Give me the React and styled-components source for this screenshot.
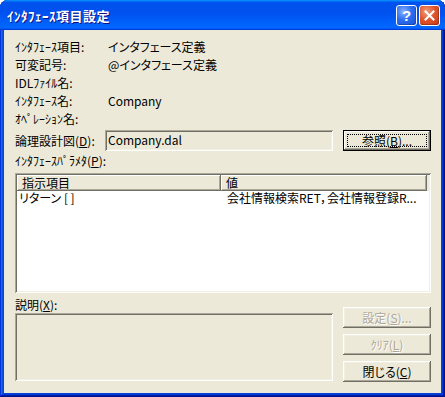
import React from "react";
import styled, { createGlobalStyle } from "styled-components";

const GlobalStyle = createGlobalStyle`
  html, body {
    margin: 0;
    padding: 0;
    background: #ffffff;
  }
  body {
    font-family: "Noto Sans CJK JP", "Liberation Sans", sans-serif;
    font-size: 12px;
    font-feature-settings: "palt";
    color: #000;
  }
`;

const Window = styled.div`
  width: 445px;
  height: 397px;
  box-sizing: border-box;
  display: flex;
  flex-direction: column;
  background: #0842d9;
  border-radius: 8px 8px 0 0;
  overflow: hidden;
  box-shadow: inset -1px -1px #00138c, inset 1px 1px #0831d9,
    inset -2px -2px #001ea0, inset 2px 2px #166aee, inset -3px -3px #003bda,
    inset 3px 3px #0855dd;
`;

const TitleBar = styled.div`
  height: 30px;
  flex: none;
  display: flex;
  align-items: center;
  justify-content: space-between;
  padding: 0 5px 0 7px;
  box-sizing: border-box;
  background: linear-gradient(
    180deg,
    #0997ff,
    #0053ee 8%,
    #0050ee 40%,
    #0066ff 88%,
    #0066ff 93%,
    #005bff 95%,
    #003dd7 96%,
    #003dd7
  );
`;

const TitleText = styled.span`
  color: #fff;
  font-weight: bold;
  font-size: 13px;
  letter-spacing: 0.5px;
  text-shadow: 1px 1px #0f1089;
`;

const TitleButtons = styled.div`
  display: flex;
  gap: 2px;
`;

const CaptionButton = styled.div`
  width: 21px;
  height: 21px;
  box-sizing: border-box;
  border: 1px solid #fff;
  border-radius: 3px;
  display: flex;
  align-items: center;
  justify-content: center;
  color: #fff;
  font-family: "Liberation Sans", sans-serif;
  font-weight: bold;
  font-size: 15px;
  background: ${(p) =>
    p.$close
      ? "radial-gradient(circle at 35% 30%, #f0a080 0%, #e0562e 45%, #c43512 100%)"
      : "radial-gradient(circle at 35% 30%, #8ab4ff 0%, #2d6ff0 45%, #1a4fd8 100%)"};
  box-shadow: inset -1px -1px rgba(0, 0, 0, 0.2);
`;

const Client = styled.div`
  flex: 1;
  margin: 0 4px 4px;
  background: #ece9d8;
  padding: 7px 10px 0 11px;
  display: flex;
  flex-direction: column;
  font-size: 12px;
`;

const InfoGrid = styled.div`
  display: grid;
  grid-template-columns: 93px 1fr;
  grid-auto-rows: 18px;
  align-items: center;
`;

const Text = styled.span`
  white-space: nowrap;
  line-height: 15px;
`;

const FileRow = styled.div`
  display: flex;
  align-items: center;
  margin-top: 3px;
  height: 21px;
`;

const FieldLabel = styled.span`
  width: ${(p) => p.$w || 90}px;
  flex: none;
  white-space: nowrap;
`;

const Sunken = styled.div`
  box-sizing: border-box;
  width: ${(p) => p.$w}px;
  height: ${(p) => p.$h}px;
  background: ${(p) => p.$bg || "#ece9d8"};
  box-shadow: inset 1px 1px #aca899, inset -1px -1px #fff,
    inset 2px 2px #716f64, inset -2px -2px #f1efe2;
  padding: 2px 3px;
  line-height: 16px;
  white-space: nowrap;
  overflow: hidden;
`;

const Button = styled.div`
  box-sizing: border-box;
  width: 88px;
  height: 21px;
  flex: none;
  display: flex;
  align-items: center;
  justify-content: center;
  background: #ece9d8;
  white-space: nowrap;
  color: ${(p) => (p.$disabled ? "#aca899" : "#000")};
  text-shadow: ${(p) => (p.$disabled ? "1px 1px #fff" : "none")};
  box-shadow: ${(p) =>
    p.$default
      ? "inset 0 0 0 1px #000, inset -2px -2px #716f64, inset 2px 2px #fff, inset -3px -3px #aca899"
      : "inset -1px -1px #716f64, inset 1px 1px #fff, inset -2px -2px #aca899, inset 2px 2px #f1efe2"};
  position: relative;
  &::after {
    content: "";
    display: ${(p) => (p.$default ? "block" : "none")};
    position: absolute;
    inset: 4px;
    border: 1px dotted #000;
  }
`;

const Spacer = styled.div`
  width: 10px;
  flex: none;
`;

const SectionLabel = styled.div`
  height: 15px;
  line-height: 15px;
  margin: ${(p) => p.$m || "0"};
  white-space: nowrap;
`;

const ListView = styled.div`
  box-sizing: border-box;
  width: 416px;
  height: 120px;
  background: #fff;
  padding: 2px;
  box-shadow: inset 1px 1px #aca899, inset -1px -1px #fff,
    inset 2px 2px #716f64, inset -2px -2px #f1efe2;
  display: flex;
  flex-direction: column;
`;

const HeaderRow = styled.div`
  display: flex;
  height: 16px;
  flex: none;
`;

const HeaderCell = styled.div`
  box-sizing: border-box;
  width: ${(p) => p.$w}px;
  flex: ${(p) => (p.$fill ? 1 : "none")};
  height: 16px;
  line-height: 15px;
  padding-left: ${(p) => (p.$fill ? 0 : 5)}px;
  background: #ece9d8;
  box-shadow: ${(p) =>
    p.$fill
      ? "none"
      : "inset -1px -1px #716f64, inset 1px 1px #fff, inset -2px -2px #aca899"};
  white-space: nowrap;
`;

const DataRow = styled.div`
  display: flex;
  height: 16px;
  flex: none;
`;

const DataCell = styled.div`
  width: ${(p) => p.$w}px;
  padding-left: ${(p) => p.$pad}px;
  box-sizing: border-box;
  line-height: 14px;
  white-space: nowrap;
`;

const Bottom = styled.div`
  display: flex;
  margin-top: 3px;
`;

const DescColumn = styled.div`
  display: flex;
  flex-direction: column;
`;

const ButtonColumn = styled.div`
  display: flex;
  flex-direction: column;
  gap: 6px;
  padding-top: 11px;
`;

export default function App() {
  return (
    <>
      <GlobalStyle />
      <Window>
        <TitleBar>
          <TitleText>ｲﾝﾀﾌｪｰｽ項目設定</TitleText>
          <TitleButtons>
            <CaptionButton>?</CaptionButton>
            <CaptionButton $close>
              <svg width="11" height="11" viewBox="0 0 11 11">
                <path
                  d="M1.5 1.5 L9.5 9.5 M9.5 1.5 L1.5 9.5"
                  stroke="#fff"
                  strokeWidth="2"
                  strokeLinecap="square"
                />
              </svg>
            </CaptionButton>
          </TitleButtons>
        </TitleBar>
        <Client>
          <InfoGrid>
            <Text>ｲﾝﾀﾌｪｰｽ項目:</Text>
            <Text>インタフェース定義</Text>
            <Text>可変記号:</Text>
            <Text>@インタフェース定義</Text>
            <Text>IDLﾌｧｲﾙ名:</Text>
            <Text />
            <Text>ｲﾝﾀﾌｪｰｽ名:</Text>
            <Text>Company</Text>
            <Text>ｵﾍﾟﾚｰｼｮﾝ名:</Text>
            <Text />
          </InfoGrid>
          <FileRow>
            <FieldLabel>
              論理設計図(<u>D</u>):
            </FieldLabel>
            <Sunken $w={228} $h={21}>
              Company.dal
            </Sunken>
            <Spacer />
            <Button $default>
              参照(<u>B</u>)...
            </Button>
          </FileRow>
          <SectionLabel $m="2px 0 5px">
            ｲﾝﾀﾌｪｰｽﾊﾟﾗﾒﾀ(<u>P</u>):
          </SectionLabel>
          <ListView>
            <HeaderRow>
              <HeaderCell $w={204}>指示項目</HeaderCell>
              <HeaderCell $w={206}>値</HeaderCell>
              <HeaderCell $fill />
            </HeaderRow>
            <DataRow>
              <DataCell $w={204} $pad={2}>
                リターン [ ]
              </DataCell>
              <DataCell $w={206} $pad={6}>
                会社情報検索RET，会社情報登録R...
              </DataCell>
            </DataRow>
          </ListView>
          <Bottom>
            <DescColumn>
              <SectionLabel $m="1px 0 1px">
                説明(<u>X</u>):
              </SectionLabel>
              <Sunken $w={318} $h={68} />
            </DescColumn>
            <Spacer />
            <ButtonColumn>
              <Button $disabled>
                設定(<u>S</u>)...
              </Button>
              <Button $disabled>
                ｸﾘｱ(<u>L</u>)
              </Button>
              <Button>
                閉じる(<u>C</u>)
              </Button>
            </ButtonColumn>
          </Bottom>
        </Client>
      </Window>
    </>
  );
}
